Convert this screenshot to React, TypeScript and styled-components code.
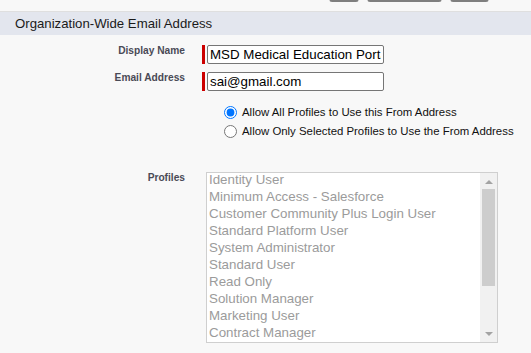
import { createGlobalStyle, styled } from 'styled-components';

const GlobalStyle = createGlobalStyle`
  html, body {
    margin: 0;
    padding: 0;
    background: #f8f8f8;
    font-family: 'Liberation Sans', Arial, sans-serif;
  }
`;

const Page = styled.div`
  width: 531px;
  height: 353px;
  overflow: hidden;
  background: #f8f8f8;
`;

const ButtonBar = styled.div`
  height: 11px;
  display: flex;
  justify-content: flex-end;
  align-items: flex-start;
  gap: 8px;
  padding-right: 42px;
  overflow: hidden;
`;

const TopButton = styled.div<{ $w: number }>`
  width: ${(p) => p.$w}px;
  height: 20px;
  margin-top: -18px;
  box-sizing: border-box;
  border: 1px solid #b5b5b5;
  border-bottom: 2px solid #7f7f7f;
  border-radius: 3px;
  background: #f3f3f3;
`;

const SectionHeader = styled.div`
  border-top: 1px solid #dfdfdf;
  height: 23px;
  background: #e3e6ee;
  display: flex;
  align-items: center;
  padding-left: 15px;
  font-size: 13.2px;
  color: #1a1a1a;
`;

const Form = styled.div`
  padding-top: 10px;
  display: flex;
  flex-direction: column;
`;

const Row = styled.div<{ $gap?: number; $top?: number }>`
  display: grid;
  grid-template-columns: 185px 1fr;
  column-gap: 17px;
  margin-top: ${(p) => p.$top ?? 0}px;
  margin-bottom: ${(p) => p.$gap ?? 0}px;
`;

const Label = styled.div`
  text-align: right;
  font-size: 10.2px;
  font-weight: bold;
  color: #4a4a56;
  line-height: 12px;
`;

const RequiredField = styled.div`
  display: flex;
  gap: 2px;
  height: 19px;
`;

const RequiredBar = styled.div`
  width: 3px;
  background: #c00;
`;

const TextInput = styled.input`
  box-sizing: border-box;
  width: 177px;
  height: 19px;
  margin: 0;
  padding: 0 2px;
  border: 1px solid #767676;
  border-radius: 2px;
  background: #fff;
  font-family: 'Liberation Sans', Arial, sans-serif;
  font-size: 13.33px;
  color: #000;
  outline: none;
`;

const RadioGroup = styled.div`
  margin-left: 219px;
  margin-top: 14px;
  display: flex;
  flex-direction: column;
  gap: 5px;
`;

const RadioLabel = styled.label`
  display: flex;
  align-items: center;
  gap: 5px;
  font-size: 11.4px;
  color: #111;
  height: 14px;
`;

const Radio = styled.input`
  width: 13px;
  height: 13px;
  margin: 0 0 0 5px;
`;

const ListBox = styled.div`
  margin-left: 4px;
  width: 292px;
  height: 171px;
  box-sizing: border-box;
  border: 1px solid #cfcfcf;
  background: #fff;
  display: flex;
  overflow: hidden;
`;

const Options = styled.ul`
  flex: 1;
  list-style: none;
  margin: -2px 0 0;
  padding: 0 0 0 2px;
`;

const Option = styled.li`
  font-size: 13.33px;
  line-height: 17px;
  color: #9b9b9b;
  white-space: nowrap;
`;

const Scrollbar = styled.div`
  width: 17px;
  background: #f1f1f1;
  display: flex;
  flex-direction: column;
  align-items: center;
`;

const Arrow = styled.div<{ $down?: boolean }>`
  height: 17px;
  display: flex;
  align-items: center;
  justify-content: center;
  &::after {
    content: '';
    border-left: 4px solid transparent;
    border-right: 4px solid transparent;
    ${(p) =>
      p.$down
        ? 'border-top: 4px solid #a3a3a3;'
        : 'border-bottom: 4px solid #a3a3a3;'}
  }
`;

const Thumb = styled.div`
  width: 13px;
  height: 97px;
  margin-top: -1px;
  background: #cdcdcd;
`;

const Track = styled.div`
  flex: 1;
`;

const profiles = [
  'Identity User',
  'Minimum Access - Salesforce',
  'Customer Community Plus Login User',
  'Standard Platform User',
  'System Administrator',
  'Standard User',
  'Read Only',
  'Solution Manager',
  'Marketing User',
  'Contract Manager',
];

export default function App() {
  return (
    <Page>
      <GlobalStyle />
      <ButtonBar>
        <TopButton $w={30} />
        <TopButton $w={75} />
        <TopButton $w={39} />
      </ButtonBar>
      <SectionHeader>Organization-Wide Email Address</SectionHeader>
      <Form>
        <Row $gap={8}>
          <Label>Display Name</Label>
          <RequiredField>
            <RequiredBar />
            <TextInput defaultValue="MSD Medical Education Portal" />
          </RequiredField>
        </Row>
        <Row>
          <Label>Email Address</Label>
          <RequiredField>
            <RequiredBar />
            <TextInput defaultValue="sai@gmail.com" />
          </RequiredField>
        </Row>
        <RadioGroup>
          <RadioLabel>
            <Radio type="radio" name="profiles" defaultChecked />
            Allow All Profiles to Use this From Address
          </RadioLabel>
          <RadioLabel>
            <Radio type="radio" name="profiles" />
            Allow Only Selected Profiles to Use the From Address
          </RadioLabel>
        </RadioGroup>
        <Row $top={34}>
          <Label>Profiles</Label>
          <ListBox>
            <Options>
              {profiles.map((p) => (
                <Option key={p}>{p}</Option>
              ))}
            </Options>
            <Scrollbar>
              <Arrow />
              <Thumb />
              <Track />
              <Arrow $down />
            </Scrollbar>
          </ListBox>
        </Row>
      </Form>
    </Page>
  );
}
